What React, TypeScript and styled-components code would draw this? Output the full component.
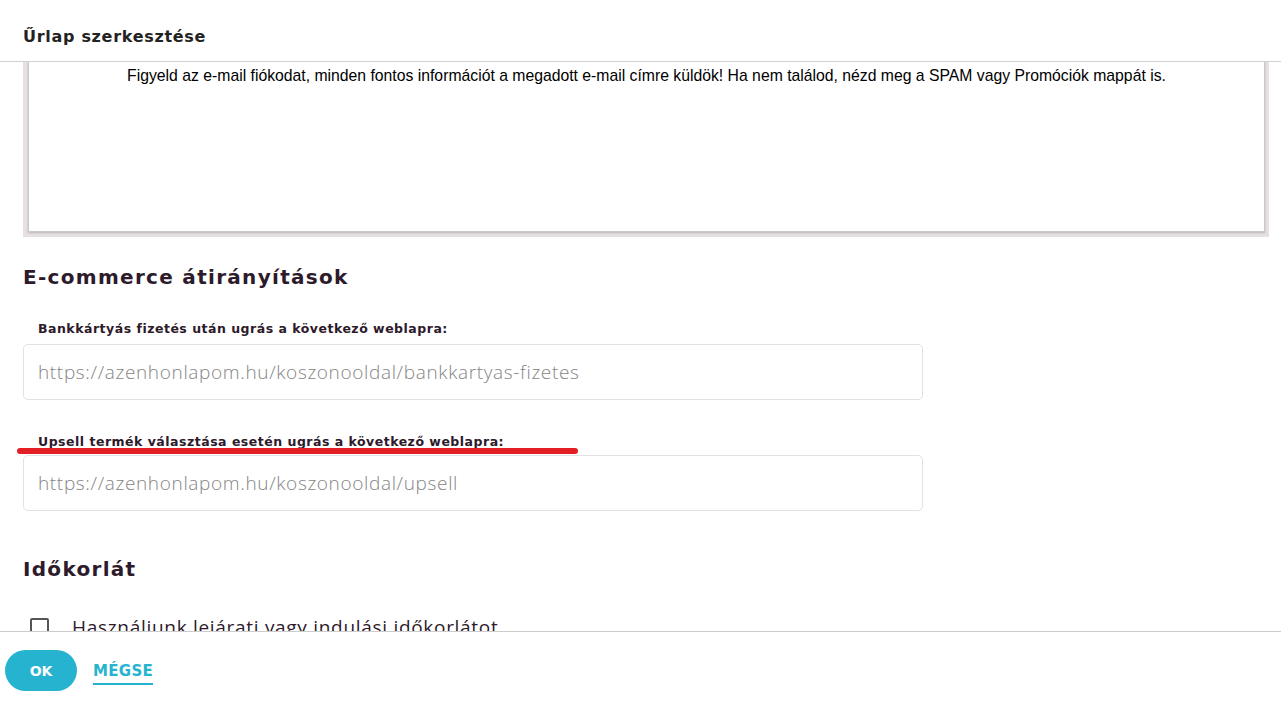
import styled, { createGlobalStyle } from 'styled-components';

const GlobalStyle = createGlobalStyle`
  html, body {
    margin: 0;
    padding: 0;
    background: #fff;
  }
  * {
    box-sizing: border-box;
  }
`;

const boldStack = `'DejaVu Sans', 'Open Sans', sans-serif`;
const lightStack = `'Open Sans', 'Noto Sans', sans-serif`;

const Dialog = styled.div`
  display: flex;
  flex-direction: column;
  height: 701px;
  font-family: ${lightStack};
  color: #2d1a2b;
`;

const Header = styled.header`
  height: 62px;
  flex-shrink: 0;
  display: flex;
  align-items: center;
  padding: 12px 23px 0;
  border-bottom: 1px solid #d0d0d0;
`;

const Title = styled.h1`
  margin: 0;
  font-family: ${boldStack};
  font-size: 16px;
  font-weight: 700;
  color: #222;
  letter-spacing: 0.7px;
`;

const Body = styled.main`
  flex: 1;
  overflow: hidden;
  padding: 0 12px 0 23px;
`;

const Preview = styled.div`
  background: #e6e0e3;
  padding: 0 4px 5px 5px;
`;

const PreviewInner = styled.div`
  background: #fff;
  height: 170px;
  border: 1px solid #c8c8c8;
  border-top: none;
  box-shadow: 0 1px 2px rgba(0, 0, 0, 0.2);
  padding: 5px 0 0;
  text-align: center;
  font-family: 'Liberation Sans', Arial, sans-serif;
  font-size: 15.75px;
  color: #000;
`;

const SectionTitle = styled.h2<{ $top: number }>`
  margin: ${(p) => p.$top}px 0 0;
  font-family: ${boldStack};
  font-size: 20px;
  font-weight: 700;
  line-height: 30px;
  letter-spacing: 1.3px;
`;

const Field = styled.div<{ $gap: number }>`
  position: relative;
  margin-top: ${(p) => p.$gap}px;
`;

const Label = styled.label<{ $space: number }>`
  display: block;
  padding-left: 15px;
  font-family: ${boldStack};
  font-size: 12.5px;
  font-weight: 700;
  line-height: 20px;
  letter-spacing: 0.5px;
  margin-bottom: ${(p) => p.$space}px;
`;

const Input = styled.input`
  display: block;
  width: 900px;
  height: 56px;
  border: 1px solid #e2e2e2;
  border-radius: 5px;
  padding: 0 14px;
  font-family: ${lightStack};
  font-size: 19px;
  font-weight: 300;
  letter-spacing: 0.65px;
  color: #333;
  outline: none;

  &::placeholder {
    color: #858585;
  }
`;

// hand-drawn marker stroke under a label
const Marker = styled.span`
  position: absolute;
  left: -6px;
  top: 16px;
  width: 561px;
  height: 6px;
  border-radius: 3px;
  background: #e31e24;
`;

const CheckRow = styled.label`
  display: flex;
  align-items: center;
  gap: 23px;
  margin-top: 30px;
  padding-left: 7px;
  font-size: 19px;
  letter-spacing: 0.7px;
  color: #2d1a2b;
`;

const Box = styled.span`
  width: 19px;
  height: 19px;
  flex-shrink: 0;
  border: 2px solid #555;
  border-radius: 2px;
`;

const Footer = styled.footer`
  height: 70px;
  flex-shrink: 0;
  border-top: 1px solid #cccccc;
  display: flex;
  align-items: center;
  gap: 16px;
  padding: 8px 5px 0;
  background: #fff;
`;

const OkButton = styled.button`
  width: 72px;
  height: 41px;
  border: none;
  border-radius: 21px;
  background: #25b3cf;
  color: #fff;
  font-family: ${boldStack};
  font-weight: 700;
  font-size: 14px;
`;

const CancelLink = styled.a`
  color: #25b3cf;
  font-family: ${boldStack};
  font-weight: 700;
  font-size: 15px;
  letter-spacing: 0.3px;
  line-height: 20px;
  padding-bottom: 2px;
  border-bottom: 2px solid #25b3cf;
  margin-top: 4px;
  cursor: pointer;
`;

export default function App() {
  return (
    <>
      <GlobalStyle />
      <Dialog>
        <Header>
          <Title>Űrlap szerkesztése</Title>
        </Header>
        <Body>
          <Preview>
            <PreviewInner>
              Figyeld az e-mail fiókodat, minden fontos információt a megadott e-mail címre küldök! Ha nem találod, nézd meg a SPAM vagy Promóciók mappát is.
            </PreviewInner>
          </Preview>

          <SectionTitle $top={25}>E-commerce átirányítások</SectionTitle>

          <Field $gap={27}>
            <Label $space={5}>Bankkártyás fizetés után ugrás a következő weblapra:</Label>
            <Input placeholder="https://azenhonlapom.hu/koszonooldal/bankkartyas-fizetes" />
          </Field>

          <Field $gap={32}>
            <Label $space={3}>Upsell termék választása esetén ugrás a következő weblapra:</Label>
            <Marker />
            <Input placeholder="https://azenhonlapom.hu/koszonooldal/upsell" />
          </Field>

          <SectionTitle $top={43}>Időkorlát</SectionTitle>

          <CheckRow>
            <Box />
            Használjunk lejárati vagy indulási időkorlátot
          </CheckRow>
        </Body>
        <Footer>
          <OkButton>OK</OkButton>
          <CancelLink>MÉGSE</CancelLink>
        </Footer>
      </Dialog>
    </>
  );
}
